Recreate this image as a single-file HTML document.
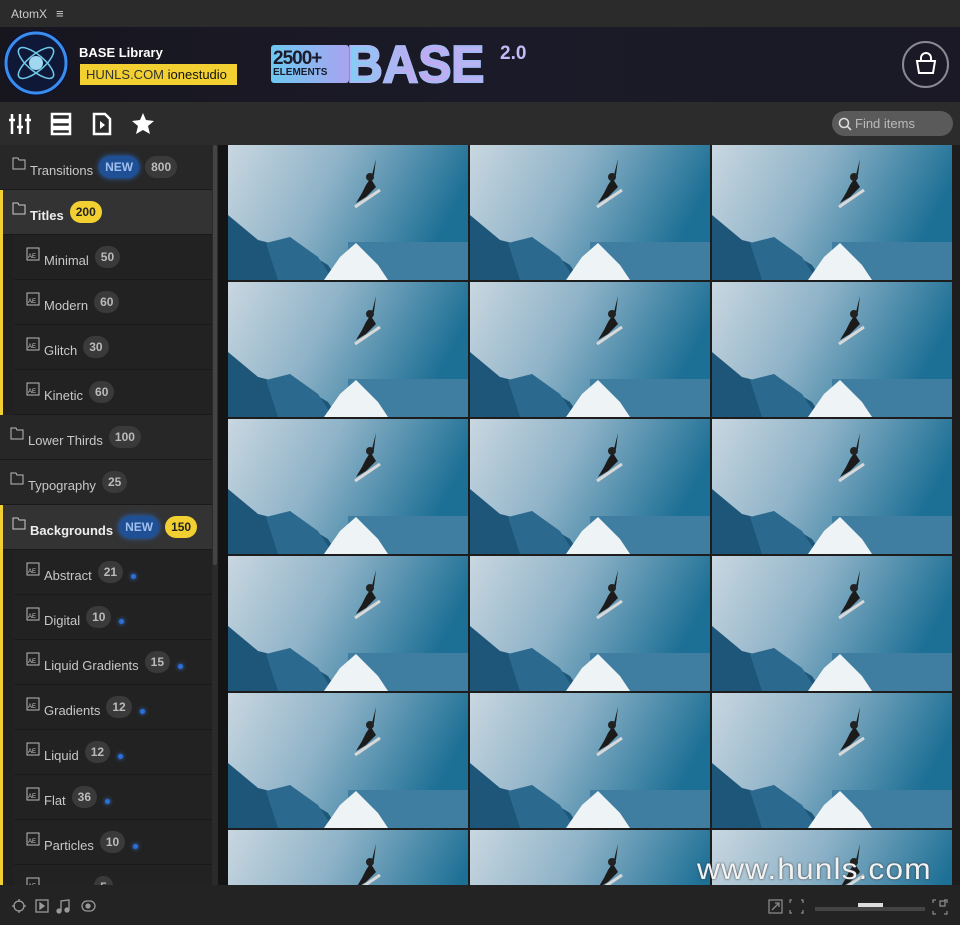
<!DOCTYPE html>
<html><head><meta charset="utf-8"><style>
*{margin:0;padding:0;box-sizing:border-box}
body{width:960px;height:925px;background:#1d1d1d;font-family:"Liberation Sans",sans-serif;position:relative;overflow:hidden;color:#ccc}
.abs{position:absolute}
.titlebar{left:0;top:0;width:960px;height:27px;background:#2b2b2b;font-size:12px;color:#ccc}
.header{left:0;top:27px;width:960px;height:75px;background:linear-gradient(90deg,#17161f,#1b1a28 50%,#1a1925)}
.toolbar{left:0;top:102px;width:960px;height:43px;background:#2c2c2c}
.side{left:0;top:145px;width:212px;height:740px;background:#202020;overflow:hidden}
.row{position:absolute;height:45px;display:flex;align-items:center;font-size:13px;color:#c8c8c8;border-bottom:1px solid #1a1a1a;padding-top:6px}
.top{left:0;width:212px;background:#272727;padding-left:12px}
.sel{background:#333;font-weight:bold;color:#eee}
.child{left:14px;width:198px;background:#222;padding-left:12px}
.ic{width:14px;height:14px;margin-right:4px;margin-top:-12px;flex:none}
.b{display:inline-block;margin-left:6px;height:22px;line-height:22px;padding:0 6px;border-radius:11px;background:#3a3a3a;font-size:12px;font-weight:bold;color:#bbb;margin-top:-6px}
.y{background:#f3d032;color:#222}
.n{background:#1f4f95;color:#9fc0ee;box-shadow:0 0 6px #2a6cc8}
.dot{width:5px;height:5px;border-radius:50%;background:#2b6fd8;margin-left:8px;box-shadow:0 0 4px #3d86ff;margin-top:2px}
.bar{left:0;width:3px;background:#f3d032}
.grid{left:228px;top:145px;width:724px;height:740px;overflow:hidden}
.t{position:absolute;width:240px;height:135px}
.bottom{left:0;top:885px;width:960px;height:40px;background:#232323}
</style></head><body>
<div class="abs titlebar"><span class="abs" style="left:11px;top:7px">AtomX</span><span class="abs" style="left:56px;top:6px;font-size:13px">≡</span></div>
<div class="abs header">
<svg class="abs" style="left:0;top:0" width="960" height="75">
<circle cx="36" cy="36" r="33" fill="#0c1330"/><circle cx="36" cy="36" r="30" fill="#101838" stroke="#3a8df0" stroke-width="3"/>
<ellipse cx="36" cy="36" rx="22" ry="8" fill="none" stroke="#6fc9e8" stroke-width="1.5" transform="rotate(40 36 36)"/>
<ellipse cx="36" cy="36" rx="22" ry="8" fill="none" stroke="#6fc9e8" stroke-width="1.5" transform="rotate(-40 36 36)"/>
<circle cx="36" cy="36" r="7" fill="#9fd8f0"/>
</svg>
<div class="abs" style="left:79px;top:18px;font-size:13px;font-weight:bold;color:#fff">BASE Library</div>
<div class="abs" style="left:80px;top:37px;width:157px;height:21px;background:#f3d032;color:#333;font-size:13px;line-height:21px;padding-left:6px">HUNLS.COM <span style="color:#111">ionestudio</span></div>
<div class="abs" style="left:271px;top:18px;width:78px;height:38px;background:linear-gradient(90deg,#6dc8f0,#a9a3f0);border-radius:3px;color:#1b1b2a;font-weight:bold;font-size:19px;line-height:19px;padding:4px 2px;letter-spacing:-1px">2500+<br><span style="font-size:10px;line-height:10px;letter-spacing:0;display:block">ELEMENTS</span></div>
<div class="abs" style="left:347px;top:8px;font-size:52px;font-weight:900;transform:scaleX(0.95);transform-origin:left;background:linear-gradient(90deg,#7fd0f5,#c3a8f0,#b7b6f5);-webkit-background-clip:text;background-clip:text;color:transparent;-webkit-text-stroke:2px #a8b8f4">BASE</div>
<div class="abs" style="left:500px;top:16px;font-size:19px;font-weight:bold;color:#c1bbf7">2.0</div>
<div class="abs" style="left:902px;top:14px;width:47px;height:47px;border:2px solid #8a8a95;border-radius:50%"></div>
<svg class="abs" style="left:913px;top:24px" width="26" height="26"><path d="M8 10V7a5 5 0 0 1 10 0v3" stroke="#fff" stroke-width="2" fill="none"/><path d="M4 10h18l-2 12H6z" stroke="#fff" stroke-width="2" fill="none"/></svg>
</div>
<div class="abs toolbar">
<svg class="abs" style="left:9px;top:10px" width="150" height="24" fill="none" stroke="#fff" stroke-width="2.5">
<path d="M3 2v20M11 2v20M19 2v20M0 8h6M8 15h6M16 8h6"/>
<rect x="43" y="2" width="18" height="6"/><rect x="43" y="10" width="18" height="5"/><rect x="43" y="17" width="18" height="5"/>
<path d="M85 2h11l5 5v15H85z"/><path d="M91 9l5 4-5 4z" fill="#fff" stroke="none"/>
<path d="M134 1l3 7 8 1-6 5 2 8-7-4-7 4 2-8-6-5 8-1z" fill="#fff" stroke="none"/>
</svg>
<div class="abs" style="left:832px;top:9px;width:121px;height:25px;border-radius:13px;background:#5a5a5a;color:#bbb;font-size:13px;line-height:25px;padding-left:23px">Find items</div>
<svg class="abs" style="left:838px;top:15px" width="14" height="14" fill="none" stroke="#ddd" stroke-width="1.6"><circle cx="6" cy="6" r="4.5"/><path d="M9 9l4 4"/></svg>
</div>
<div class="abs side">
<div class="row top" style="top:0"><svg class="ic" viewBox="0 0 14 14" fill="none" stroke="#bbb"><path d="M1 1h5l1 2h6v9H1z"/></svg>Transitions<span class="b n">NEW</span><span class="b">800</span></div>
<div class="row top sel" style="top:45px"><svg class="ic" viewBox="0 0 14 14" fill="none" stroke="#ccc"><path d="M1 1h5l1 2h6v9H1z"/></svg>Titles<span class="b y">200</span></div>
<div class="row child" style="top:90px"><svg class="ic" viewBox="0 0 14 14"><rect x="1" y="1" width="12" height="12" fill="none" stroke="#bbb"/><text x="2" y="11" font-size="6" fill="#ccc">AE</text></svg>Minimal<span class="b">50</span></div>
<div class="row child" style="top:135px"><svg class="ic" viewBox="0 0 14 14"><rect x="1" y="1" width="12" height="12" fill="none" stroke="#bbb"/><text x="2" y="11" font-size="6" fill="#ccc">AE</text></svg>Modern<span class="b">60</span></div>
<div class="row child" style="top:180px"><svg class="ic" viewBox="0 0 14 14"><rect x="1" y="1" width="12" height="12" fill="none" stroke="#bbb"/><text x="2" y="11" font-size="6" fill="#ccc">AE</text></svg>Glitch<span class="b">30</span></div>
<div class="row child" style="top:225px"><svg class="ic" viewBox="0 0 14 14"><rect x="1" y="1" width="12" height="12" fill="none" stroke="#bbb"/><text x="2" y="11" font-size="6" fill="#ccc">AE</text></svg>Kinetic<span class="b">60</span></div>
<div class="row top" style="top:270px;padding-left:10px"><svg class="ic" viewBox="0 0 14 14" fill="none" stroke="#bbb"><path d="M1 1h5l1 2h6v9H1z"/></svg>Lower Thirds<span class="b">100</span></div>
<div class="row top" style="top:315px;padding-left:10px"><svg class="ic" viewBox="0 0 14 14" fill="none" stroke="#bbb"><path d="M1 1h5l1 2h6v9H1z"/></svg>Typography<span class="b">25</span></div>
<div class="row top sel" style="top:360px"><svg class="ic" viewBox="0 0 14 14" fill="none" stroke="#ccc"><path d="M1 1h5l1 2h6v9H1z"/></svg>Backgrounds<span class="b n">NEW</span><span class="b y">150</span></div>
<div class="row child" style="top:405px"><svg class="ic" viewBox="0 0 14 14"><rect x="1" y="1" width="12" height="12" fill="none" stroke="#bbb"/><text x="2" y="11" font-size="6" fill="#ccc">AE</text></svg>Abstract<span class="b">21</span><span class="dot"></span></div>
<div class="row child" style="top:450px"><svg class="ic" viewBox="0 0 14 14"><rect x="1" y="1" width="12" height="12" fill="none" stroke="#bbb"/><text x="2" y="11" font-size="6" fill="#ccc">AE</text></svg>Digital<span class="b">10</span><span class="dot"></span></div>
<div class="row child" style="top:495px"><svg class="ic" viewBox="0 0 14 14"><rect x="1" y="1" width="12" height="12" fill="none" stroke="#bbb"/><text x="2" y="11" font-size="6" fill="#ccc">AE</text></svg>Liquid Gradients<span class="b">15</span><span class="dot"></span></div>
<div class="row child" style="top:540px"><svg class="ic" viewBox="0 0 14 14"><rect x="1" y="1" width="12" height="12" fill="none" stroke="#bbb"/><text x="2" y="11" font-size="6" fill="#ccc">AE</text></svg>Gradients<span class="b">12</span><span class="dot"></span></div>
<div class="row child" style="top:585px"><svg class="ic" viewBox="0 0 14 14"><rect x="1" y="1" width="12" height="12" fill="none" stroke="#bbb"/><text x="2" y="11" font-size="6" fill="#ccc">AE</text></svg>Liquid<span class="b">12</span><span class="dot"></span></div>
<div class="row child" style="top:630px"><svg class="ic" viewBox="0 0 14 14"><rect x="1" y="1" width="12" height="12" fill="none" stroke="#bbb"/><text x="2" y="11" font-size="6" fill="#ccc">AE</text></svg>Flat<span class="b">36</span><span class="dot"></span></div>
<div class="row child" style="top:675px"><svg class="ic" viewBox="0 0 14 14"><rect x="1" y="1" width="12" height="12" fill="none" stroke="#bbb"/><text x="2" y="11" font-size="6" fill="#ccc">AE</text></svg>Particles<span class="b">10</span><span class="dot"></span></div>
<div class="row child" style="top:720px"><svg class="ic" viewBox="0 0 14 14"><rect x="1" y="1" width="12" height="12" fill="none" stroke="#bbb"/><text x="2" y="11" font-size="6" fill="#ccc">AE</text></svg>Shapes<span class="b">5</span><span class="dot"></span></div>
<div class="abs bar" style="top:45px;height:225px"></div>
<div class="abs bar" style="top:360px;height:380px"></div>
</div>
<div class="abs" style="left:212px;top:145px;width:6px;height:740px;background:#2a2a2a"></div>
<div class="abs" style="left:213px;top:145px;width:4px;height:420px;background:#444;border-radius:2px"></div>
<div class="abs" style="left:218px;top:145px;width:10px;height:740px;background:#141414"></div>
<svg width="0" height="0" style="position:absolute"><defs>
<linearGradient id="sk" x1="0" y1="0" x2="1" y2="0.3"><stop offset="0" stop-color="#c9d7e0"/><stop offset="0.45" stop-color="#8fb3c8"/><stop offset="1" stop-color="#1c6f95"/></linearGradient>
<symbol id="th" viewBox="0 0 240 135">
<rect width="240" height="135" fill="url(#sk)"/>
<rect x="120" y="97" width="120" height="38" fill="#3f7ea0"/>
<path d="M0 70L30 95 50 100 62 92 80 108 100 120 110 135H0z" fill="#1d5679"/>
<path d="M38 98L62 92 90 112 105 135H50z" fill="#2b6a8e"/>
<path d="M96 135L112 112 128 98 135 105 150 120 160 135z" fill="#eef3f6"/>
<path d="M148 14L146 30 142 34 138 40 134 48 128 58 138 52 144 46 148 42 143 34z" fill="#1b1b1b"/>
<circle cx="142" cy="32" r="4" fill="#222"/>
<path d="M127 62L152 45" stroke="#d8d8d8" stroke-width="3"/>
</symbol></defs></svg>
<div class="abs grid">
<svg class="t" style="left:0;top:0"><use href="#th"/></svg><svg class="t" style="left:242px;top:0"><use href="#th"/></svg><svg class="t" style="left:484px;top:0"><use href="#th"/></svg>
<svg class="t" style="left:0;top:137px"><use href="#th"/></svg><svg class="t" style="left:242px;top:137px"><use href="#th"/></svg><svg class="t" style="left:484px;top:137px"><use href="#th"/></svg>
<svg class="t" style="left:0;top:274px"><use href="#th"/></svg><svg class="t" style="left:242px;top:274px"><use href="#th"/></svg><svg class="t" style="left:484px;top:274px"><use href="#th"/></svg>
<svg class="t" style="left:0;top:411px"><use href="#th"/></svg><svg class="t" style="left:242px;top:411px"><use href="#th"/></svg><svg class="t" style="left:484px;top:411px"><use href="#th"/></svg>
<svg class="t" style="left:0;top:548px"><use href="#th"/></svg><svg class="t" style="left:242px;top:548px"><use href="#th"/></svg><svg class="t" style="left:484px;top:548px"><use href="#th"/></svg>
<svg class="t" style="left:0;top:685px"><use href="#th"/></svg><svg class="t" style="left:242px;top:685px"><use href="#th"/></svg><svg class="t" style="left:484px;top:685px"><use href="#th"/></svg>
<div class="abs" style="left:469px;top:708px;font-size:30px;color:#f2f2f2;letter-spacing:1px;transform:scaleX(1.06);transform-origin:left;text-shadow:0 0 2px #333">www.hunls.com</div>
</div>
<div class="abs bottom">
<svg class="abs" style="left:10px;top:13px" width="90" height="16" fill="none" stroke="#999" stroke-width="1.3">
<circle cx="9" cy="8" r="5"/><path d="M9 1v3M9 12v3M2 8h3M13 8h3"/>
<rect x="26" y="2" width="12" height="12"/><path d="M30 5l4 3-4 3z" fill="#999"/>
<path d="M51 13V3l8-1v10" /><circle cx="49" cy="13" r="2" fill="#999"/><circle cx="57" cy="12" r="2" fill="#999"/>
<rect x="72" y="3" width="13" height="10" rx="5"/><circle cx="78" cy="8" r="2" fill="#999"/>
</svg>
<svg class="abs" style="left:768px;top:14px" width="40" height="16" fill="none" stroke="#888" stroke-width="1.3"><rect x="1" y="1" width="13" height="13"/><path d="M4 11l7-7M7 4h4v4"/><path d="M24 1h-2v3M33 1h2v3M24 14h-2v-3M33 14h2v-3"/></svg>
<div class="abs" style="left:815px;top:22px;width:110px;height:4px;background:#444"></div>
<div class="abs" style="left:858px;top:18px;width:25px;height:4px;background:#ddd"></div>
<svg class="abs" style="left:932px;top:14px" width="16" height="16" fill="none" stroke="#888" stroke-width="1.3"><path d="M1 4V1h3M15 4V1h-3M1 12v3h3M15 12v3h-3"/><rect x="8" y="2" width="5" height="5"/></svg>
</div>
</body></html>
